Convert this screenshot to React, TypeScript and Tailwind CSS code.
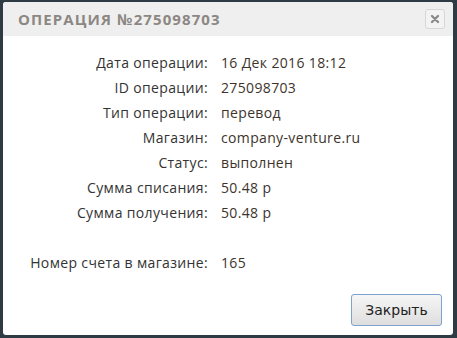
const rows: [string, string][] = [
  ["Дата операции:", "16 Дек 2016 18:12"],
  ["ID операции:", "275098703"],
  ["Тип операции:", "перевод"],
  ["Магазин:", "company-venture.ru"],
  ["Статус:", "выполнен"],
  ["Сумма списания:", "50.48 р"],
  ["Сумма получения:", "50.48 р"],
  ["", ""],
  ["Номер счета в магазине:", "165"],
];

export default function App() {
  return (
    <div className="w-[457px] h-[338px] bg-[#2e3a44] pt-[2px] pl-[3px] pr-[4px] pb-[3px]">
      <div className="h-full bg-white rounded-[3px] flex flex-col overflow-hidden">
        <div className="h-[34px] bg-[#efefef] flex items-center justify-between pl-[15px] pr-[8px]">
          <span className="font-['Open_Sans',sans-serif] font-bold text-[15px] tracking-[1.1px] text-[#8c8782] uppercase">
            Операция №275098703
          </span>
          <button className="w-[20px] h-[20px] mt-[-1px] rounded-[3px] border border-[#d6d6d6] bg-[#f3f3f3] flex items-center justify-center">
            <svg width="10" height="10" viewBox="0 0 10 10">
              <path d="M2 2 L8 8 M8 2 L2 8" stroke="#8a8a8a" strokeWidth="2.4" strokeLinecap="round" />
            </svg>
          </button>
        </div>
        <div className="pt-[14px] flex flex-col font-['Open_Sans',sans-serif] text-[14px] tracking-[0.35px] text-[#333]">
          {rows.map(([label, value], i) => (
            <div key={i} className="flex h-[25px] items-center">
              <div className="w-[205px] text-right">{label}</div>
              <div className="pl-[13px] text-[#3d342c]">{value}</div>
            </div>
          ))}
        </div>
        <div className="flex-1 flex items-end justify-end pr-[11px] pb-[9px]">
          <button className="w-[91px] h-[32px] rounded-[3px] border border-[#7da2ce] bg-gradient-to-b from-[#f6f6f6] to-[#dedede] font-['DejaVu_Sans',sans-serif] text-[14px] text-[#222]">
            Закрыть
          </button>
        </div>
      </div>
    </div>
  );
}
